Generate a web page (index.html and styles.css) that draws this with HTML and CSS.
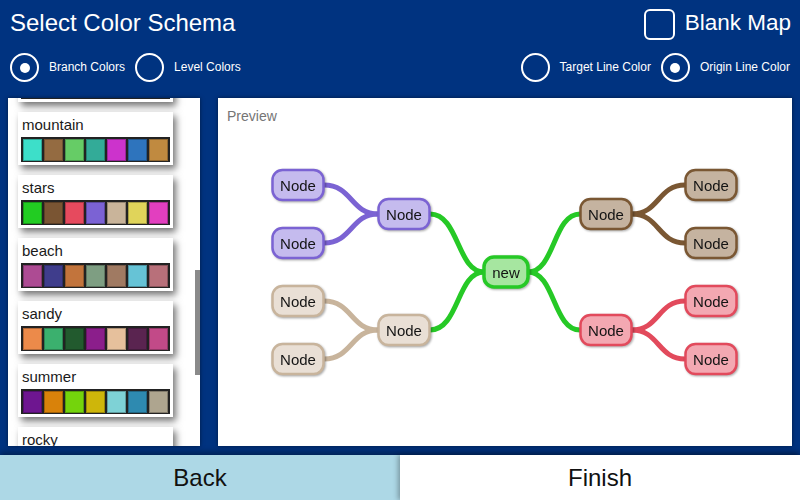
FILE: index.html
```html
<!DOCTYPE html>
<html lang="en">
<head>
<meta charset="utf-8">
<title>Select Color Schema</title>
<link rel="stylesheet" href="styles.css">
</head>
<body>
<div class="app">
  <header class="top">
    <div class="row1">
      <h1 class="title">Select Color Schema</h1>
      <div class="check"><span class="box"></span><span class="check-label">Blank Map</span></div>
    </div>
    <div class="row2">
      <div class="group">
        <div class="radio-item"><span class="radio on"></span><span class="rlabel">Branch Colors</span></div>
        <div class="radio-item"><span class="radio"></span><span class="rlabel">Level Colors</span></div>
      </div>
      <div class="group">
        <div class="radio-item"><span class="radio"></span><span class="rlabel">Target Line Color</span></div>
        <div class="radio-item"><span class="radio on"></span><span class="rlabel">Origin Line Color</span></div>
      </div>
    </div>
  </header>

  <main class="main">
    <section class="schemes">
      <div class="list">
        <div class="card">
          <div class="name"></div>
          <div class="swatches">
            <span class="sw c-f1"></span><span class="sw c-f2"></span><span class="sw c-f3"></span><span class="sw c-f4"></span><span class="sw c-f5"></span><span class="sw c-f6"></span><span class="sw c-f7"></span>
          </div>
        </div>
        <div class="card">
          <div class="name">mountain</div>
          <div class="swatches">
            <span class="sw c-m1"></span><span class="sw c-m2"></span><span class="sw c-m3"></span><span class="sw c-m4"></span><span class="sw c-m5"></span><span class="sw c-m6"></span><span class="sw c-m7"></span>
          </div>
        </div>
        <div class="card">
          <div class="name">stars</div>
          <div class="swatches">
            <span class="sw c-s1"></span><span class="sw c-s2"></span><span class="sw c-s3"></span><span class="sw c-s4"></span><span class="sw c-s5"></span><span class="sw c-s6"></span><span class="sw c-s7"></span>
          </div>
        </div>
        <div class="card">
          <div class="name">beach</div>
          <div class="swatches">
            <span class="sw c-b1"></span><span class="sw c-b2"></span><span class="sw c-b3"></span><span class="sw c-b4"></span><span class="sw c-b5"></span><span class="sw c-b6"></span><span class="sw c-b7"></span>
          </div>
        </div>
        <div class="card">
          <div class="name">sandy</div>
          <div class="swatches">
            <span class="sw c-y1"></span><span class="sw c-y2"></span><span class="sw c-y3"></span><span class="sw c-y4"></span><span class="sw c-y5"></span><span class="sw c-y6"></span><span class="sw c-y7"></span>
          </div>
        </div>
        <div class="card">
          <div class="name">summer</div>
          <div class="swatches">
            <span class="sw c-u1"></span><span class="sw c-u2"></span><span class="sw c-u3"></span><span class="sw c-u4"></span><span class="sw c-u5"></span><span class="sw c-u6"></span><span class="sw c-u7"></span>
          </div>
        </div>
        <div class="card">
          <div class="name">rocky</div>
          <div class="swatches">
            <span class="sw c-r1"></span><span class="sw c-r2"></span><span class="sw c-r3"></span><span class="sw c-r4"></span><span class="sw c-r5"></span><span class="sw c-r6"></span><span class="sw c-r7"></span>
          </div>
        </div>
      </div>
      <div class="thumb"></div>
    </section>

    <section class="preview">
      <div class="preview-label">Preview</div>
      <svg class="tree" width="574" height="348" viewBox="0 0 574 348">
        <g class="edges" fill="none" stroke-width="5" stroke-linecap="round">
          <path class="e-green" d="M310 174 C337 174 335 116 362 116"/>
          <path class="e-green" d="M310 174 C337 174 335 232 362 232"/>
          <path class="e-green" d="M266 174 C239 174 241 116 212 116"/>
          <path class="e-green" d="M266 174 C239 174 241 232 212 232"/>
          <path class="e-brown" d="M414 116 C441 116 440 87 467 87"/>
          <path class="e-brown" d="M414 116 C441 116 440 145 467 145"/>
          <path class="e-red" d="M414 232 C441 232 440 203 467 203"/>
          <path class="e-red" d="M414 232 C441 232 440 261 467 261"/>
          <path class="e-purple" d="M160 116 C133 116 134 87 106 87"/>
          <path class="e-purple" d="M160 116 C133 116 134 145 106 145"/>
          <path class="e-beige" d="M160 232 C133 232 134 203 106 203"/>
          <path class="e-beige" d="M160 232 C133 232 134 261 106 261"/>
        </g>
        <g class="nodes">
          <g class="node n-green root"><rect x="266" y="159" width="44" height="30" rx="10"/><text x="288" y="179.5">new</text></g>

          <g class="node n-brown"><rect x="362.5" y="101" width="51" height="30" rx="10"/><text x="388" y="121.5">Node</text></g>
          <g class="node n-red"><rect x="362.5" y="217" width="51" height="30" rx="10"/><text x="388" y="237.5">Node</text></g>
          <g class="node n-purple"><rect x="160.5" y="101" width="51" height="30" rx="10"/><text x="186" y="121.5">Node</text></g>
          <g class="node n-beige"><rect x="160.5" y="217" width="51" height="30" rx="10"/><text x="186" y="237.5">Node</text></g>

          <g class="node n-brown"><rect x="467.5" y="72" width="51" height="30" rx="10"/><text x="493" y="92.5">Node</text></g>
          <g class="node n-brown"><rect x="467.5" y="130" width="51" height="30" rx="10"/><text x="493" y="150.5">Node</text></g>
          <g class="node n-red"><rect x="467.5" y="188" width="51" height="30" rx="10"/><text x="493" y="208.5">Node</text></g>
          <g class="node n-red"><rect x="467.5" y="246" width="51" height="30" rx="10"/><text x="493" y="266.5">Node</text></g>

          <g class="node n-purple"><rect x="54.5" y="72" width="51" height="30" rx="10"/><text x="80" y="92.5">Node</text></g>
          <g class="node n-purple"><rect x="54.5" y="130" width="51" height="30" rx="10"/><text x="80" y="150.5">Node</text></g>
          <g class="node n-beige"><rect x="54.5" y="188" width="51" height="30" rx="10"/><text x="80" y="208.5">Node</text></g>
          <g class="node n-beige"><rect x="54.5" y="246" width="51" height="30" rx="10"/><text x="80" y="266.5">Node</text></g>
        </g>
      </svg>
    </section>
  </main>

  <footer class="bar">
    <button class="btn back">Back</button>
    <button class="btn finish">Finish</button>
  </footer>
</div>
</body>
</html>
```

FILE: styles.css
```css
html, body {
  margin: 0;
  padding: 0;
}
body {
  width: 800px;
  height: 500px;
  overflow: hidden;
  background: #003380;
  font-family: "Liberation Sans", Arial, sans-serif;
  color: #fff;
}
.app {
  width: 800px;
  height: 500px;
  display: flex;
  flex-direction: column;
}

/* header */
.top {
  padding: 8px 10px 0 10px;
}
.row1 {
  height: 32px;
  display: flex;
  justify-content: space-between;
  align-items: center;
}
.title {
  margin: -3px 0 0 0;
  font-size: 24px;
  font-weight: normal;
  line-height: 32px;
  color: #fff;
}
.check {
  display: flex;
  align-items: center;
  margin-right: -1px;
}
.box {
  width: 31px;
  height: 31px;
  box-sizing: border-box;
  border: 2.5px solid #fff;
  border-radius: 6px;
}
.check-label {
  margin-left: 10px;
  font-size: 22.5px;
  line-height: 32px;
  margin-top: -3px;
}
.row2 {
  margin-top: 13px;
  height: 29px;
  display: flex;
  justify-content: space-between;
}
.group {
  display: flex;
  align-items: center;
}
.radio-item {
  display: flex;
  align-items: center;
}
.radio-item + .radio-item {
  margin-left: 10px;
}
.radio {
  width: 29px;
  height: 29px;
  box-sizing: border-box;
  border: 2.5px solid #fff;
  border-radius: 50%;
  display: flex;
  align-items: center;
  justify-content: center;
}
.radio.on::after {
  content: "";
  width: 10px;
  height: 10px;
  border-radius: 50%;
  background: #fff;
}
.rlabel {
  margin-left: 10px;
  font-size: 12px;
  line-height: 29px;
}

/* main */
.main {
  margin-top: 16px;
  height: 348px;
  padding: 0 8px;
  display: flex;
  gap: 18px;
}
.schemes {
  width: 192px;
  background: #fff;
  overflow: hidden;
  position: relative;
  box-shadow: 0 0 4px rgba(0, 0, 0, 0.5);
}
.list {
  margin-top: -49px;
  padding-left: 10px;
}
.card {
  width: 155px;
  height: 53px;
  box-sizing: border-box;
  padding: 0 3px 3px 3px;
  margin-bottom: 10px;
  background: #fff;
  box-shadow: 3px 4px 7px rgba(0, 0, 0, 0.55);
  color: #1a1a1a;
}
.name {
  height: 25px;
  line-height: 25px;
  font-size: 15px;
  padding-left: 1px;
}
.swatches {
  height: 25px;
  box-sizing: border-box;
  padding: 1.5px;
  background: #222;
  display: grid;
  grid-template-columns: repeat(7, 1fr);
  gap: 1.5px;
}
.sw {
  display: block;
  box-shadow: inset 0 0 0 1px rgba(0, 0, 0, 0.25);
}
.thumb {
  position: absolute;
  right: 0;
  top: 172px;
  width: 5px;
  height: 105px;
  background: #8a8a8a;
}

/* swatch colours */
.c-f1 { background: #2b5e2b; } .c-f2 { background: #3a3a3a; } .c-f3 { background: #3f6f3a; }
.c-f4 { background: #1c2a86; } .c-f5 { background: #a88a2a; } .c-f6 { background: #2f5f66; } .c-f7 { background: #2660a0; }

.c-m1 { background: #3ddfc9; } .c-m2 { background: #946b41; } .c-m3 { background: #66cc66; }
.c-m4 { background: #33ab98; } .c-m5 { background: #cc33cc; } .c-m6 { background: #2e74bd; } .c-m7 { background: #c08a40; }

.c-s1 { background: #22cc22; } .c-s2 { background: #7a5533; } .c-s3 { background: #e64a5e; }
.c-s4 { background: #7b62d4; } .c-s5 { background: #c9b49a; } .c-s6 { background: #e0d45a; } .c-s7 { background: #e23fbf; }

.c-b1 { background: #ad4b93; } .c-b2 { background: #3f3d8c; } .c-b3 { background: #c2743c; }
.c-b4 { background: #7e9e82; } .c-b5 { background: #a07a62; } .c-b6 { background: #66c3d6; } .c-b7 { background: #b8707a; }

.c-y1 { background: #ec8a4a; } .c-y2 { background: #3bb06e; } .c-y3 { background: #225a2e; }
.c-y4 { background: #8b1e8b; } .c-y5 { background: #e6c09c; } .c-y6 { background: #5a2450; } .c-y7 { background: #c24a88; }

.c-u1 { background: #6e1690; } .c-u2 { background: #d9820a; } .c-u3 { background: #74d40c; }
.c-u4 { background: #ceb60a; } .c-u5 { background: #7ed2d6; } .c-u6 { background: #2e8ab0; } .c-u7 { background: #aea58f; }

.c-r1 { background: #6b5a4a; } .c-r2 { background: #8a8a8a; } .c-r3 { background: #a0522d; }
.c-r4 { background: #556b2f; } .c-r5 { background: #b0a090; } .c-r6 { background: #4a4a5a; } .c-r7 { background: #c0a060; }

/* preview */
.preview {
  flex: 1;
  background: #fff;
  position: relative;
  box-shadow: 0 0 4px rgba(0, 0, 0, 0.5);
}
.preview-label {
  position: absolute;
  left: 9px;
  top: 10px;
  font-size: 14px;
  color: #757575;
}
.tree {
  display: block;
}
.e-green { stroke: #26c926; }
.e-brown { stroke: #7a5733; }
.e-red { stroke: #e24a5c; }
.e-purple { stroke: #7b63d3; }
.e-beige { stroke: #c8b49c; }

.node rect {
  stroke-width: 2.5px;
}
.node {
  filter: drop-shadow(1px 1.5px 1px rgba(0, 0, 0, 0.35));
}
.node text {
  font-family: "Liberation Sans", Arial, sans-serif;
  font-size: 15px;
  fill: #141414;
  text-anchor: middle;
}
.root rect { stroke-width: 3.5px; }
.n-green rect { fill: #a6e6a0; stroke: #26c926; }
.n-brown rect { fill: #c5b3a0; stroke: #7a5733; }
.n-red rect { fill: #f3a8b2; stroke: #e24a5c; }
.n-purple rect { fill: #c5bbee; stroke: #7b63d3; }
.n-beige rect { fill: #e9dfd5; stroke: #c8b49c; }

/* footer */
.bar {
  margin-top: 9px;
  height: 45px;
  display: flex;
  box-shadow: 0 -3px 6px rgba(0, 0, 0, 0.35);
  position: relative;
}
.btn {
  flex: 1;
  border: none;
  margin: 0;
  padding: 0;
  font-family: "Liberation Sans", Arial, sans-serif;
  font-size: 24px;
  color: #111;
}
.back {
  background: #add8e6;
}
.finish {
  background: #fff;
  box-shadow: -2px 0 5px rgba(0, 0, 0, 0.3);
}
```
